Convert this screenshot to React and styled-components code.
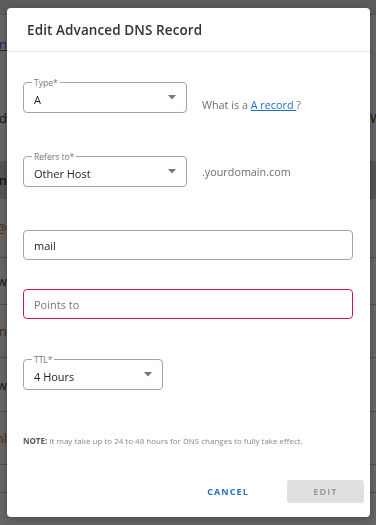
import React from "react";
import styled, { createGlobalStyle } from "styled-components";

const Global = createGlobalStyle`
  html, body { margin: 0; padding: 0; }
  body { font-family: "Open Sans", "Liberation Sans", sans-serif; background: #fff; width: 376px; height: 525px; overflow: hidden; }
  * { box-sizing: border-box; }
`;

/* ---------- background page ---------- */
const Page = styled.div`
  width: 376px;
  height: 525px;
  background: #fff;
  overflow: hidden;
  font-size: 13px;
  color: #333;
`;
const TopBar = styled.div`
  height: 15px;
  background: #e6e6e6;
  border-bottom: 1px solid #d0d0d0;
`;
const BgRow = styled.div`
  display: flex;
  justify-content: space-between;
  align-items: ${(p) => p.$align || "center"};
  height: ${(p) => p.$h}px;
  padding-top: ${(p) => p.$pt || 0}px;
  line-height: 16px;
  background: ${(p) => (p.$head ? "#d2d2d2" : "transparent")};
  border-bottom: ${(p) => (p.$line ? "1px solid #c4c4c4" : "none")};
`;
const LeftCell = styled.div`
  width: 7px;
  overflow: hidden;
  display: flex;
  justify-content: flex-end;
  white-space: nowrap;
  color: ${(p) => p.$c || "#333"};
  text-decoration: ${(p) => (p.$u ? "underline" : "none")};
  font-weight: ${(p) => (p.$b ? 600 : 400)};
`;
const RightCell = styled.div`
  width: 6px;
  overflow: hidden;
  white-space: nowrap;
  color: ${(p) => p.$c || "#333"};
`;

/* ---------- overlay + modal ---------- */
const Overlay = styled.div`
  position: fixed;
  inset: 0;
  background: rgba(0, 0, 0, 0.6);
  display: flex;
  padding: 8px 6px 8px 7px;
`;
const Modal = styled.div`
  width: 363px;
  height: 509px;
  background: #fff;
  border-radius: 4px;
  display: flex;
  flex-direction: column;
  box-shadow: 0 2px 10px rgba(0, 0, 0, 0.3);
`;
const Header = styled.div`
  height: 44px;
  padding: 0 20px;
  display: flex;
  align-items: center;
  border-bottom: 1px solid #e2e2e2;
`;
const Title = styled.h2`
  margin: 0;
  font-size: 13.5px;
  font-weight: 600;
  color: #333;
  letter-spacing: 0.1px;
`;
const Body = styled.div`
  flex: 1;
  padding: 0 16px;
  display: flex;
  flex-direction: column;
`;
const FieldRow = styled.div`
  display: flex;
  align-items: center;
  gap: 15px;
  margin-top: ${(p) => p.$mt}px;
`;
const Outlined = styled.div`
  position: relative;
  width: ${(p) => p.$w}px;
  height: ${(p) => p.$h || 31}px;
  border: 1px solid ${(p) => (p.$error ? "#d4173d" : "#a3a3a3")};
  border-radius: 4px;
  display: flex;
  align-items: center;
  padding: ${(p) => (p.$select ? "3px 10px 0 10px" : "0 10px")};
`;
const FloatLabel = styled.span`
  position: absolute;
  top: -6px;
  left: 8px;
  padding: 0 2px;
  background: #fff;
  font-size: 8.5px;
  line-height: 11px;
  color: #777;
`;
const Value = styled.span`
  flex: 1;
  font-size: 11px;
  color: ${(p) => (p.$placeholder ? "#777" : "#222")};
`;
const Caret = styled.svg`
  width: 8px;
  height: 5px;
  margin-top: -3px;
`;
const Side = styled.span`
  font-size: 10.8px;
  color: #6e6e6e;
  align-self: ${(p) => (p.$low ? "flex-end" : "center")};
  margin-bottom: ${(p) => (p.$low ? 1 : 0)}px;
`;
const Link = styled.a`
  color: #1f6fc5;
  text-decoration: underline;
`;
const Note = styled.p`
  margin: 45px 0 0 0;
  font-size: 8px;
  color: #888;
  span { font-weight: 700; color: #555; }
`;
const Footer = styled.div`
  display: flex;
  justify-content: flex-end;
  align-items: center;
  gap: 20px;
  padding: 0 6px 14px 0;
`;
const Btn = styled.button`
  font-family: inherit;
  font-size: 9px;
  font-weight: 700;
  letter-spacing: 1.1px;
  border: none;
  border-radius: 3px;
  height: 23px;
  width: ${(p) => p.$w}px;
  background: ${(p) => (p.$disabled ? "#e0e0e0" : "transparent")};
  color: ${(p) => (p.$disabled ? "#9a9a9a" : "#1f6fc5")};
  padding: 0;
`;

const CaretIcon = () => (
  <Caret viewBox="0 0 8 5">
    <path d="M0 0 L8 0 L4 4.5 Z" fill="#777" />
  </Caret>
);

const Select = ({ label, value, w }) => (
  <Outlined $w={w} $select>
    <FloatLabel>{label}</FloatLabel>
    <Value>{value}</Value>
    <CaretIcon />
  </Outlined>
);

export default function App() {
  return (
    <>
      <Global />
      <Page>
        <TopBar />
        <BgRow $h={37} $align="flex-end">
          <LeftCell $c="#1f6fc5" $u>Domain</LeftCell>
          <RightCell />
        </BgRow>
        <BgRow $h={109} $align="flex-start" $pt={58}>
          <LeftCell>Advanced</LeftCell>
          <RightCell $c="#333">Web</RightCell>
        </BgRow>
        <BgRow $h={38} $head>
          <LeftCell $b>Domain</LeftCell>
          <RightCell />
        </BgRow>
        <BgRow $h={59} $line>
          <LeftCell $c="#c0701e">@</LeftCell>
          <RightCell />
        </BgRow>
        <BgRow $h={47} $line>
          <LeftCell>www</LeftCell>
          <RightCell />
        </BgRow>
        <BgRow $h={53} $line>
          <LeftCell $c="#c0701e">mn</LeftCell>
          <RightCell />
        </BgRow>
        <BgRow $h={54} $line>
          <LeftCell>www</LeftCell>
          <RightCell />
        </BgRow>
        <BgRow $h={53} $line>
          <LeftCell $c="#c0701e">ml</LeftCell>
          <RightCell />
        </BgRow>
        <BgRow $h={28} $line>
          <LeftCell />
          <RightCell />
        </BgRow>
      </Page>
      <Overlay>
        <Modal>
          <Header>
            <Title>Edit Advanced DNS Record</Title>
          </Header>
          <Body>
            <FieldRow $mt={30}>
              <Select label="Type*" value="A" w={164} />
              <Side $low>
                What is a <Link href="#">A record </Link>?
              </Side>
            </FieldRow>
            <FieldRow $mt={43}>
              <Select label="Refers to*" value="Other Host" w={164} />
              <Side>.yourdomain.com</Side>
            </FieldRow>
            <FieldRow $mt={43}>
              <Outlined $w={330} $h={30}>
                <Value>mail</Value>
              </Outlined>
            </FieldRow>
            <FieldRow $mt={29}>
              <Outlined $w={330} $h={30} $error>
                <Value $placeholder>Points to</Value>
              </Outlined>
            </FieldRow>
            <FieldRow $mt={40}>
              <Select label="TTL*" value="4 Hours" w={140} />
            </FieldRow>
            <Note>
              <span>NOTE:</span> It may take up to 24 to 48 hours for DNS changes to fully take effect.
            </Note>
          </Body>
          <Footer>
            <Btn $w={78}>CANCEL</Btn>
            <Btn $w={77} $disabled>EDIT</Btn>
          </Footer>
        </Modal>
      </Overlay>
    </>
  );
}
